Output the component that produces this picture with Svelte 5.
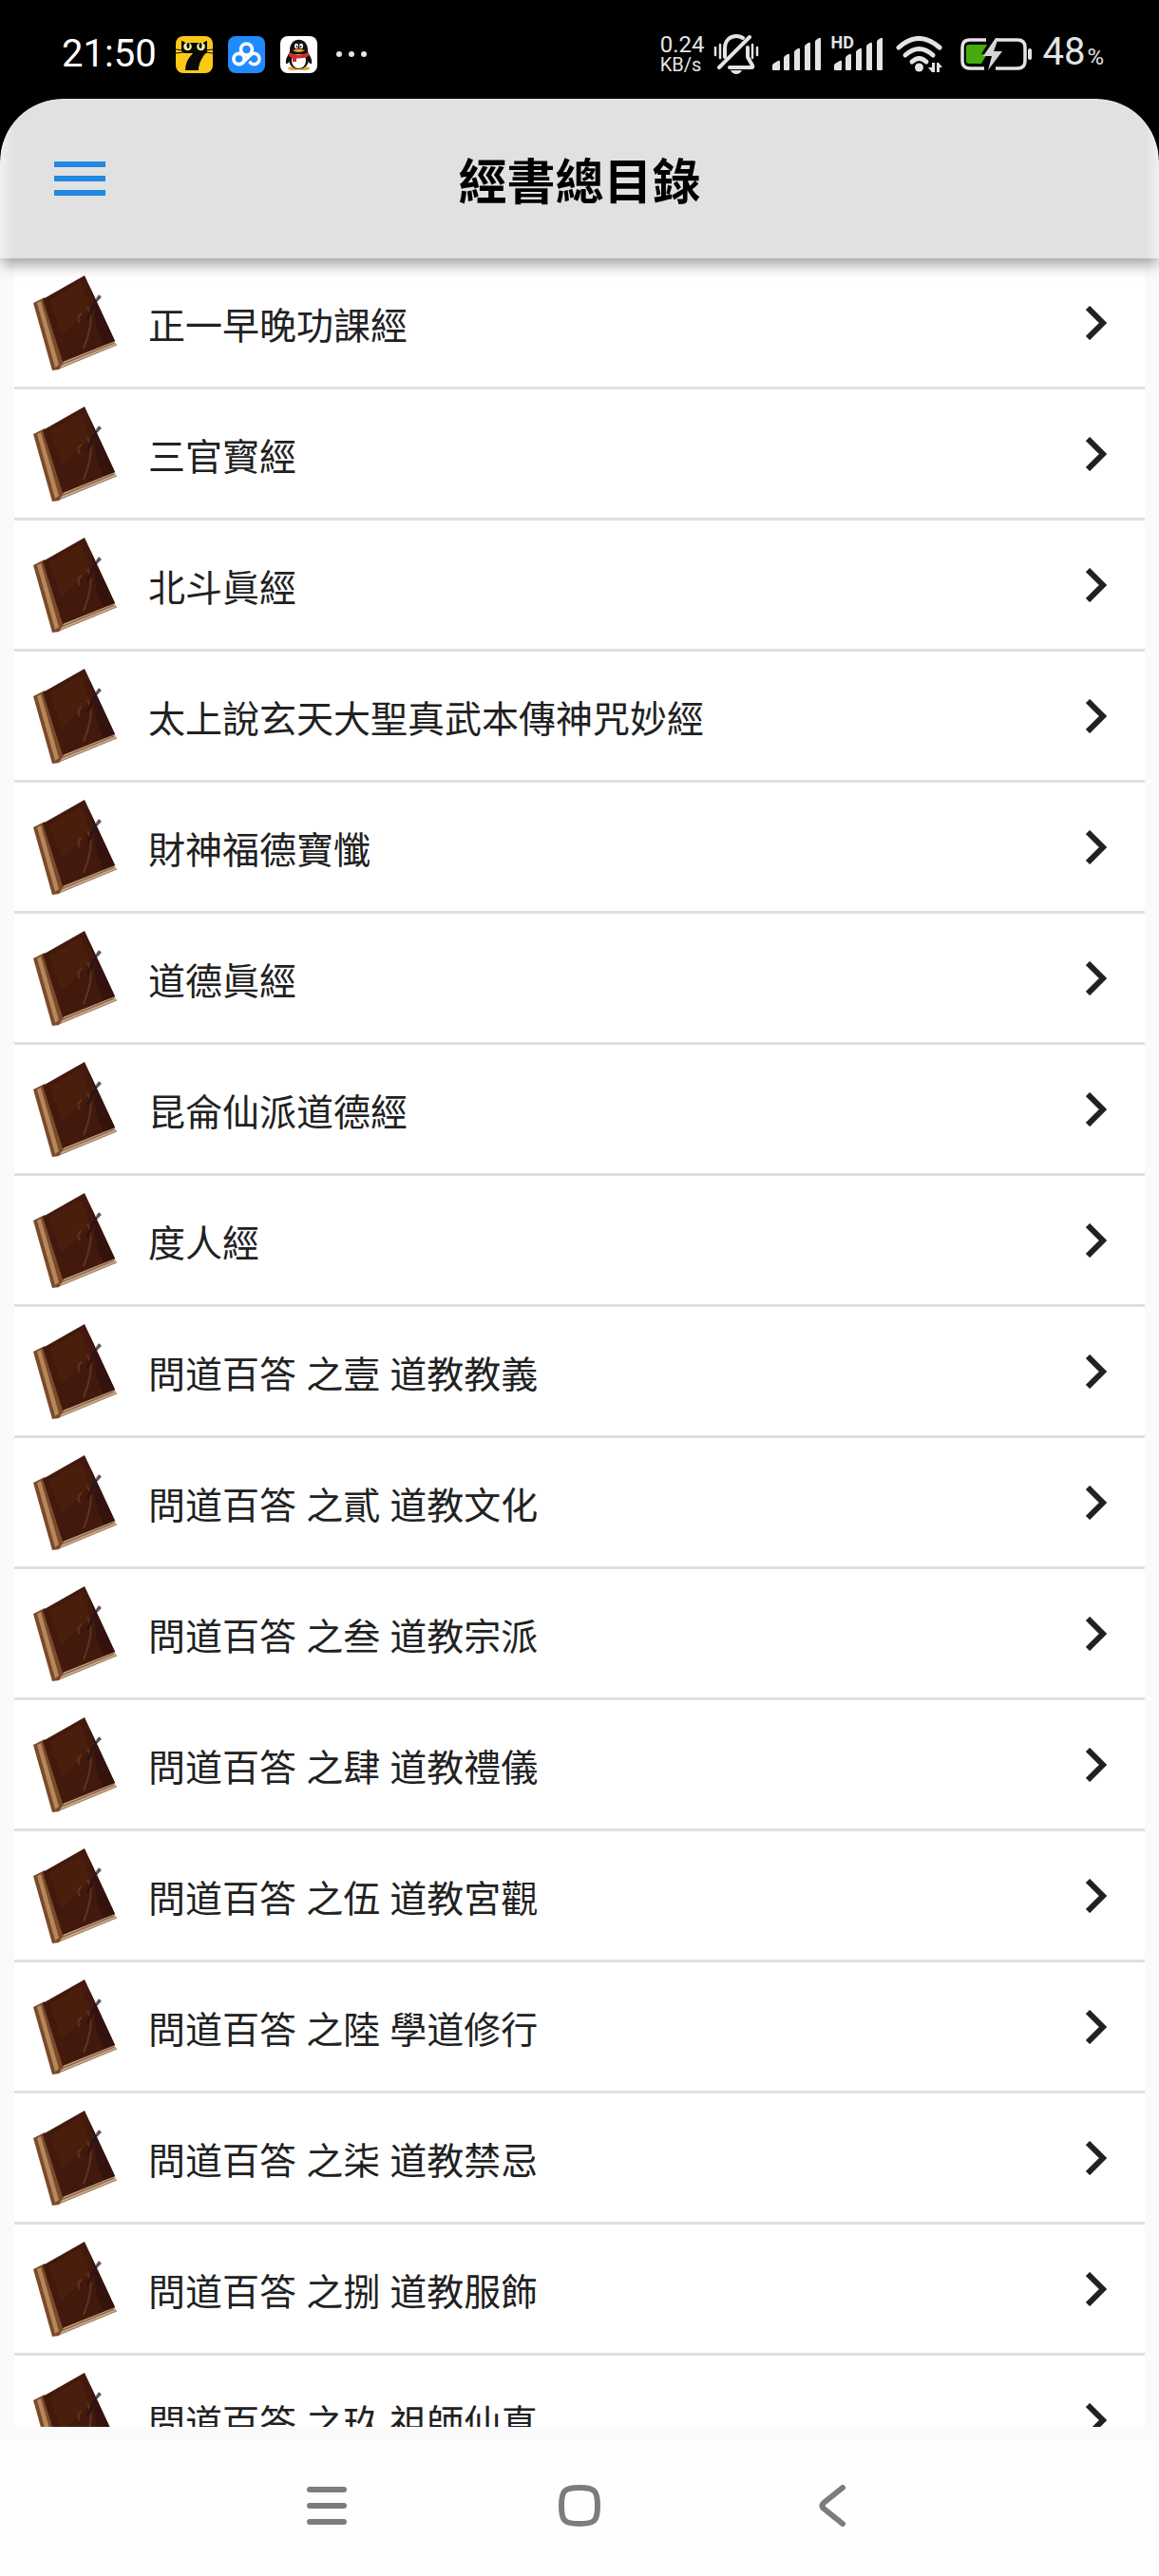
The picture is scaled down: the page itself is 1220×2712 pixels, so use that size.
<script lang="ts">
  interface Scripture {
    id: number;
    title: string;
  }

  const titles: string[] = [
    '正一早晚功課經',
    '三官寳經',
    '北斗眞經',
    '太上說玄天大聖真武本傳神咒妙經',
    '財神福德寶懺',
    '道德眞經',
    '昆侖仙派道德經',
    '度人經',
    '問道百答 之壹 道教教義',
    '問道百答 之貳 道教文化',
    '問道百答 之叁 道教宗派',
    '問道百答 之肆 道教禮儀',
    '問道百答 之伍 道教宮觀',
    '問道百答 之陸 學道修行',
    '問道百答 之柒 道教禁忌',
    '問道百答 之捌 道教服飾',
    '問道百答 之玖 祖師仙真',
  ];

  const scriptures: Scripture[] = titles.map((title, i) => ({ id: i + 1, title }));
</script>

{#snippet signal()}
  <svg class="signal" viewBox="0 0 51 34" aria-hidden="true">
    <path d="M0 33v-4q0-1 1-2l5-3q2-1 2 1v8q0 1-1 1H1q-1 0-1-1z" />
    <path d="M12 33V21q0-1 1-2l3-2q2-1 2 1v15q0 1-1 1h-4q-1 0-1-1z" />
    <path d="M23 33V15q0-1 1-2l3-2q2-1 2 1v21q0 1-1 1h-4q-1 0-1-1z" />
    <path d="M34 33V9q0-1 1-2l3-2q2-1 2 1v27q0 1-1 1h-4q-1 0-1-1z" />
    <path d="M45 33V4q0-1 1-2l3-2q2-1 2 1v32q0 1-1 1h-4q-1 0-1-1z" />
  </svg>
{/snippet}

<div class="screen">
  <div class="status-bar">
    <div class="status-left">
      <time class="clock">21:50</time>
      <svg class="app-icon" viewBox="0 0 39 39" aria-hidden="true">
        <rect width="39" height="39" rx="8" fill="#fcc918" />
        <path d="M6 5q2 0 4 2h19q2-2 4-2v12q-3 2-5 6-4 6-4 13H10q0-10 8-18H9q-3-1-3-3z" fill="#0a0a05" />
        <path d="M0 14l8 1M0 18l8-1M39 14l-8 1M39 18l-8-1" stroke="#0a0a05" stroke-width="1" />
        <circle cx="12.5" cy="11" r="4.3" fill="#e9f2a5" />
        <circle cx="26.5" cy="11" r="4.3" fill="#e9f2a5" />
        <ellipse cx="13" cy="10" rx="1.5" ry="3" fill="#0a0a05" />
        <ellipse cx="26" cy="10" rx="1.5" ry="3" fill="#0a0a05" />
      </svg>
      <svg class="app-icon" viewBox="0 0 39 39" aria-hidden="true">
        <rect width="39" height="39" rx="8" fill="#1f8bff" />
        <g fill="none" stroke="#fff" stroke-width="3.6" stroke-linecap="round">
          <circle cx="19.5" cy="14" r="6" />
          <circle cx="11.5" cy="24" r="5.6" />
          <path d="M15.5 28l8-8a5.6 5.6 0 1 1 0 8" />
        </g>
      </svg>
      <svg class="app-icon" viewBox="0 0 39 39" aria-hidden="true">
        <rect width="39" height="39" rx="8" fill="#fff" />
        <ellipse cx="14" cy="34" rx="6" ry="2" fill="#e8a23a" />
        <ellipse cx="25" cy="34" rx="6" ry="2" fill="#e8a23a" />
        <path d="M10 17q-5 7-4 12 2 1 4-3zM29 17q5 7 4 12-2 1-4-3z" fill="#111" />
        <ellipse cx="19.5" cy="25" rx="10.5" ry="10" fill="#111" />
        <ellipse cx="19.5" cy="26" rx="7.5" ry="8" fill="#fff" />
        <path d="M10 15C10 0 29 0 29 15v4H10z" fill="#111" />
        <ellipse cx="17" cy="10.5" rx="2" ry="2.8" fill="#fff" />
        <ellipse cx="22" cy="10.5" rx="2" ry="2.8" fill="#fff" />
        <circle cx="17.5" cy="11" r="1" fill="#111" />
        <circle cx="21.5" cy="11" r="1" fill="#111" />
        <path d="M13 15q6.500-3 13 0-6.500 4-13 0z" fill="#eba13a" />
        <path d="M9 17q10 5 21 0v4q-5 3-13 2.500V27h-4v-4q-3-1-4-2z" fill="#c9302c" />
      </svg>
      <svg class="more" viewBox="0 0 32 6" aria-hidden="true">
        <circle cx="3" cy="3" r="3" />
        <circle cx="16" cy="3" r="3" />
        <circle cx="29" cy="3" r="3" />
      </svg>
    </div>

    <div class="status-right">
      <div class="net-speed">
        <span class="rate">0.24</span>
        <span class="unit">KB/s</span>
      </div>
      <svg class="bell" viewBox="0 0 48 42" aria-hidden="true">
        <g fill="none" stroke="#e4e4e4" stroke-width="4" stroke-linecap="round" stroke-linejoin="round">
          <path d="M6 35L38 3" />
          <path d="M12 24V15C12 6 18 2 24 2q4 0 7 2" />
          <path d="M36 14v10l5 9q1 2-1 2H17" />
        </g>
        <path d="M18 38h12q-2 4-6 4t-6-4z" />
        <path
          d="M2 14v8M7 11v14M41 11v14M46 14v8"
          fill="none"
          stroke="#e4e4e4"
          stroke-width="2.5"
          stroke-linecap="round"
        />
      </svg>
      {@render signal()}
      <div class="hd-signal">
        {@render signal()}
        <span class="hd">HD</span>
      </div>
      <svg class="wifi" viewBox="0 0 50 38" aria-hidden="true">
        <g fill="none" stroke="#e4e4e4" stroke-width="5" stroke-linecap="round">
          <path d="M3 12Q24-7 46 12" />
          <path d="M10 20Q24.500 7 39 20" />
          <path d="M17 27q7.500-7 15 0" />
        </g>
        <circle cx="24.5" cy="33" r="4.5" />
        <path d="M38 28v10h3V28zM38 38l-4-5h4zM43 38V28h2l4 5h-3v5z" />
      </svg>
      <svg class="battery" viewBox="0 0 76 34" aria-hidden="true">
        <path
          d="M27 2H10Q2 2 2 10v14q0 8 8 8h15M39 2h21q8 0 8 8v14q0 8-8 8H37"
          fill="none"
          stroke="#e4e4e4"
          stroke-width="3.5"
        />
        <path d="M6 10q0-3 3-3h19l-6 10h6l-6 10H9q-3 0-3-3z" fill="#46ab0e" />
        <path d="M37 0L24 19h9l-4 15 15-20h-9l5-14z" fill="#d6d6d6" />
        <rect x="71" y="11" width="4" height="12" rx="2" />
      </svg>
      <div class="level">48<span class="percent">%</span></div>
    </div>
  </div>

  <header class="app-bar">
    <button class="menu" type="button" aria-label="選單">
      <svg viewBox="0 0 54 36" aria-hidden="true">
        <path d="M0 0h54v6H0zM0 15h54v6H0zM0 30h54v6H0z" />
      </svg>
    </button>
    <h1>經書總目錄</h1>
  </header>

  <main class="content">
    <ul class="list">
      {#each scriptures as item (item.id)}
        <li>
          <a class="row" href="#{item.id}">
            <svg class="book" viewBox="0 0 90 104" aria-hidden="true">
              <path d="M29 92l57-22 3 5-63 26z" fill="#c9aa88" />
              <path d="M30 96l56-23" stroke="#8d6b50" stroke-width="1.5" />
              <path d="M26 101l63-26" stroke="#9a7a60" stroke-width="1" />
              <path d="M1 31l12-6 20 68-5 8-7 1z" fill="#7b4a2a" />
              <path d="M5 31l4-2 19 67-4 3z" fill="#b5885c" />
              <path d="M11 27L55 2l32 69-55 22z" fill="#42190c" />
              <path d="M18 28L51 9l10 26-30 30z" fill="#4a1e0d" />
              <path d="M60 13l27 58-12 4q-9-18-9-32 0-14-6-30z" fill="#34120d" />
              <path d="M52 42q-6 4-2 10M58 35q5 8 3 20t-7 24" fill="none" stroke="#5e3426" stroke-width="2" />
              <path d="M68 27l3-4M65 31l7-7" stroke="#64505a" stroke-width="2.5" />
              <path d="M67 28L58 48" stroke="#2b1418" stroke-width="3" />
            </svg>
            <span class="title">{item.title}</span>
            <svg class="chevron" viewBox="0 0 22 36" aria-hidden="true">
              <path d="M2 2l16 16L2 34" />
            </svg>
          </a>
        </li>
      {/each}
    </ul>
  </main>

  <nav class="system-nav">
    <button type="button" aria-label="最近">
      <svg viewBox="0 0 44 44" aria-hidden="true">
        <path d="M4 5h36M4 22h36M4 39h36" />
      </svg>
    </button>
    <button type="button" aria-label="主畫面">
      <svg viewBox="0 0 44 44" aria-hidden="true">
        <path d="M22 3c16 0 19 3 19 19s-3 19-19 19S3 38 3 22 6 3 22 3z" />
      </svg>
    </button>
    <button type="button" aria-label="返回">
      <svg viewBox="0 0 44 44" aria-hidden="true">
        <path d="M33 3L13 19q-3 3 0 6l20 16" />
      </svg>
    </button>
  </nav>
</div>

<style>
  :global(body) {
    margin: 0;
    background: #000;
  }

  .screen {
    display: flex;
    flex-direction: column;
    height: 100vh;
    background: #000;
    font-family: 'Noto Sans', 'Noto Sans CJK SC', sans-serif;
  }

  button {
    display: flex;
    align-items: center;
    justify-content: center;
    padding: 0;
    border: 0;
    background: none;
    cursor: pointer;
  }

  svg {
    display: block;
    flex: none;
  }

  .status-bar {
    display: flex;
    align-items: center;
    justify-content: space-between;
    box-sizing: border-box;
    height: 104px;
    padding: 10px 58px 0 65px;
    color: #e4e4e4;
    font-family: Roboto, sans-serif;
  }

  .status-bar svg {
    fill: #e4e4e4;
  }

  .status-left,
  .status-right {
    display: flex;
    align-items: center;
  }

  .status-left {
    gap: 16px;
  }

  .clock {
    margin-right: 4px;
    color: #fff;
    font-size: 40px;
    line-height: 48px;
  }

  .app-icon {
    width: 39px;
    height: 39px;
  }

  .more {
    width: 32px;
    height: 6px;
    margin-left: 4px;
  }

  .status-right {
    gap: 14px;
  }

  .net-speed {
    display: flex;
    flex-direction: column;
  }

  .rate {
    font-size: 24px;
    line-height: 22px;
  }

  .unit {
    font-size: 20px;
    line-height: 20px;
  }

  .bell {
    width: 48px;
    height: 42px;
    margin-left: -4px;
  }

  .signal {
    width: 51px;
    height: 34px;
  }

  .hd-signal {
    position: relative;
  }

  .hd {
    position: absolute;
    top: -4px;
    left: -4px;
    font-size: 18px;
    font-weight: 700;
    line-height: 18px;
  }

  .wifi {
    width: 50px;
    height: 38px;
  }

  .battery {
    width: 76px;
    height: 34px;
    margin-left: 4px;
  }

  .level {
    margin-left: -4px;
    font-size: 40px;
    line-height: 48px;
  }

  .percent {
    margin-left: 2px;
    font-size: 24px;
  }

  .app-bar {
    position: relative;
    z-index: 1;
    display: grid;
    grid-template-columns: 168px 1fr 168px;
    align-items: center;
    height: 168px;
    border-radius: 66px 66px 0 0;
    background: linear-gradient(90deg, #f0f0f0, #e1e1e1 14px, #e1e1e1 calc(100% - 14px), #f0f0f0);
    box-shadow: 0 8px 16px -2px rgba(0, 0, 0, 0.4);
    clip-path: inset(0 0 -40px 0 round 66px 66px 0 0);
  }

  .menu {
    width: 168px;
    height: 110px;
  }

  .menu svg {
    width: 54px;
    height: 36px;
    fill: #2288e0;
  }

  h1 {
    margin: 0;
    padding-top: 4px;
    color: #000;
    font-size: 51px;
    font-weight: 700;
    line-height: 64px;
    text-align: center;
  }

  .content {
    flex: 1;
    min-height: 0;
    padding: 0 15px 14px;
    background: #fafafa;
  }

  .list {
    height: 100%;
    margin: 0;
    padding: 0;
    overflow-y: auto;
    background: #fff;
    list-style: none;
    scrollbar-width: none;
  }

  .row {
    display: flex;
    align-items: center;
    box-sizing: border-box;
    height: 138px;
    padding: 0 48px 0 19px;
    border-bottom: 3px solid #dfdfdf;
    color: #212121;
    text-decoration: none;
  }

  .book {
    width: 90px;
    height: 104px;
  }

  .title {
    flex: 1;
    margin-left: 32px;
    padding-top: 4px;
    font-size: 39px;
    line-height: 56px;
    white-space: nowrap;
  }

  .chevron {
    width: 22px;
    height: 36px;
    margin-right: -8px;
    fill: none;
    stroke: #212121;
    stroke-width: 6px;
  }

  .system-nav {
    display: flex;
    justify-content: center;
    gap: 222px;
    padding: 47px 0 52px;
    background: #fefefe;
  }

  .system-nav svg {
    width: 44px;
    height: 44px;
    fill: none;
    stroke: #7c7c7c;
    stroke-width: 6px;
    stroke-linecap: round;
    stroke-linejoin: round;
  }
</style>
